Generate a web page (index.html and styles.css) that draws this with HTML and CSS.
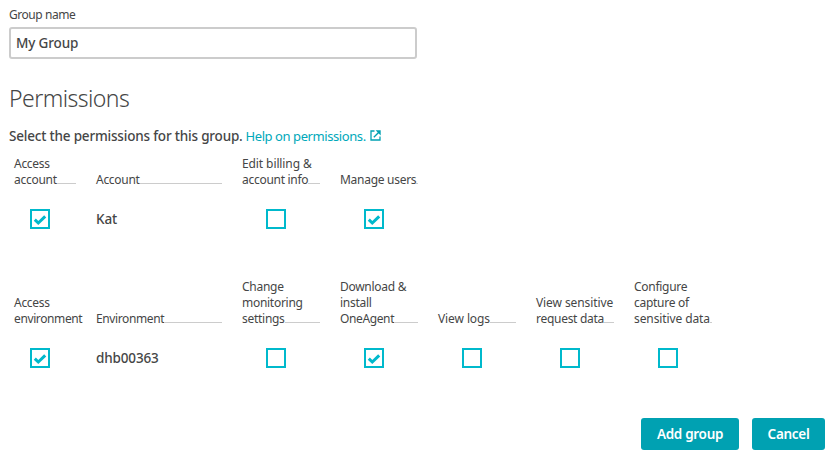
FILE: index.html
```html
<!DOCTYPE html>
<html lang="en">
<head>
<meta charset="utf-8">
<title>Group permissions</title>
<link rel="stylesheet" href="styles.css">
</head>
<body>
<main class="page">
  <label class="field-label" for="group"><span>Group name</span></label>
  <input class="field" id="group" type="text" value="My Group">
  <h1 class="title">Permissions</h1>
  <p class="intro"><span class="lead">Select the permissions for this group.</span>
    <a class="help" href="#"><span>Help on permissions.</span><svg class="external" viewBox="0 0 11 11"><path d="M4.5 1H1v9h9V6.5M3.8 7.2L8.8 2.2"/><path class="solid" d="M5.6 .3h5.1V5.4z"/></svg></a></p>

  <section class="grid account">
    <div class="head"><span>Access</span><div class="last"><span>account</span></div></div>
    <div class="head"><div class="last"><span>Account</span></div></div>
    <div class="head"><span class="wide">Edit billing &amp;</span><div class="last"><span>account info</span></div></div>
    <div class="head"><div class="last"><span>Manage users</span></div></div>
    <div class="box first"><svg viewBox="0 0 16 16"><path d="M2.8 8.6l3.5 3.4L13.2 5.4"/></svg></div>
    <div class="name">Kat</div>
    <div class="box"></div>
    <div class="box"><svg viewBox="0 0 16 16"><path d="M2.8 8.6l3.5 3.4L13.2 5.4"/></svg></div>
  </section>

  <section class="grid environment">
    <div class="head"><span>Access</span><div class="last"><span class="narrow">environment</span></div></div>
    <div class="head"><div class="last"><span class="narrow">Environment</span></div></div>
    <div class="head"><span>Change</span><span>monitoring</span><div class="last"><span>settings</span></div></div>
    <div class="head"><span>Download &amp;</span><span>install</span><div class="last"><span class="narrow">OneAgent</span></div></div>
    <div class="head"><div class="last"><span class="wide">View logs</span></div></div>
    <div class="head"><span class="wide">View sensitive</span><div class="last"><span>request data</span></div></div>
    <div class="head"><span>Configure</span><span>capture of</span><div class="last"><span class="wide">sensitive data</span></div></div>
    <div class="box first"><svg viewBox="0 0 16 16"><path d="M2.8 8.6l3.5 3.4L13.2 5.4"/></svg></div>
    <div class="name">dhb00363</div>
    <div class="box"></div>
    <div class="box"><svg viewBox="0 0 16 16"><path d="M2.8 8.6l3.5 3.4L13.2 5.4"/></svg></div>
    <div class="box"></div>
    <div class="box"></div>
    <div class="box"></div>
  </section>

  <footer class="actions">
    <button class="button add" type="button">Add group</button>
    <button class="button cancel" type="button">Cancel</button>
  </footer>
</main>
</body>
</html>
```
FILE: styles.css
```css
* { box-sizing: border-box; }
body {
  margin: 0;
  background: #fff;
  color: #454646;
  font-family: "Noto Sans", "Open Sans", sans-serif;
}
.page {
  width: 832px;
  height: 458px;
  padding: 7px 7px 0 9px;
  overflow: hidden;
}
.field-label {
  display: block;
  height: 20px;
  font-size: 12px;
  line-height: 16px;
  letter-spacing: -0.45px;
}
.field {
  display: block;
  width: 408px;
  height: 32px;
  padding: 0 5px 1px;
  border: 2px solid #ccc;
  border-radius: 3px;
  background: #fff;
  color: #454646;
  font: 500 13.5px "Noto Sans", sans-serif;
  letter-spacing: -0.15px;
  outline: none;
}
.title {
  margin: 23px 0 0;
  font-size: 23px;
  font-weight: 300;
  line-height: 32px;
  letter-spacing: -0.55px;
}
.intro {
  display: flex;
  gap: 4px;
  height: 20px;
  margin: 12px 0 0;
  font-size: 13.5px;
  line-height: 20px;
  white-space: nowrap;
}
.lead { width: 232.5px; font-weight: 500; letter-spacing: -0.19px; }
.help {
  display: flex;
  gap: 5px;
  color: #00a8ba;
  font-size: 13px;
  letter-spacing: -0.42px;
  text-decoration: none;
}
.help span { width: 119.5px; }
.external { width: 11px; height: 11px; margin-top: 4px; fill: none; stroke: #00a1b2; stroke-width: 1.3; }
.external .solid { fill: #00a1b2; stroke: none; }
.grid {
  display: grid;
  grid-template-columns: 62px 126px repeat(5, 78px);
  column-gap: 20px;
  padding-left: 5px;
}
.account {
  grid-template-columns: 62px 126px repeat(2, 78px);
  grid-template-rows: 32px 20px;
  row-gap: 21px;
  margin-top: 10px;
}
.environment { margin-top: 50px; grid-template-rows: 48px 20px; row-gap: 21px; }
.head {
  display: flex;
  flex-direction: column;
  justify-content: flex-end;
  font-size: 12px;
  line-height: 16px;
  letter-spacing: -0.28px;
  white-space: nowrap;
}
.wide { letter-spacing: -0.1px; }
.narrow { letter-spacing: -0.38px; }
.last { display: flex; }
.last::after {
  content: "";
  flex: 1;
  height: 1px;
  margin-top: 11px;
  background: #ccc;
}
.box {
  width: 20px;
  height: 20px;
  margin-left: 24px;
  border: 2px solid #00b9cc;
}
.first { margin-left: 16px; }
.box svg { display: block; width: 16px; height: 16px; fill: none; stroke: #00b9cc; stroke-width: 3; }
.name { font-size: 13.5px; font-weight: 500; line-height: 20px; letter-spacing: -0.15px; }
.actions {
  display: flex;
  justify-content: flex-end;
  gap: 13px;
  margin-top: 50px;
}
.button {
  height: 32px;
  padding: 0 0 1px;
  border: 0;
  border-radius: 3px;
  background: #00a1b2;
  color: #fff;
  font: 600 13.5px "Noto Sans", "Open Sans", sans-serif;
  letter-spacing: -0.3px;
}
.add { width: 98px; }
.cancel { width: 73px; }
```
